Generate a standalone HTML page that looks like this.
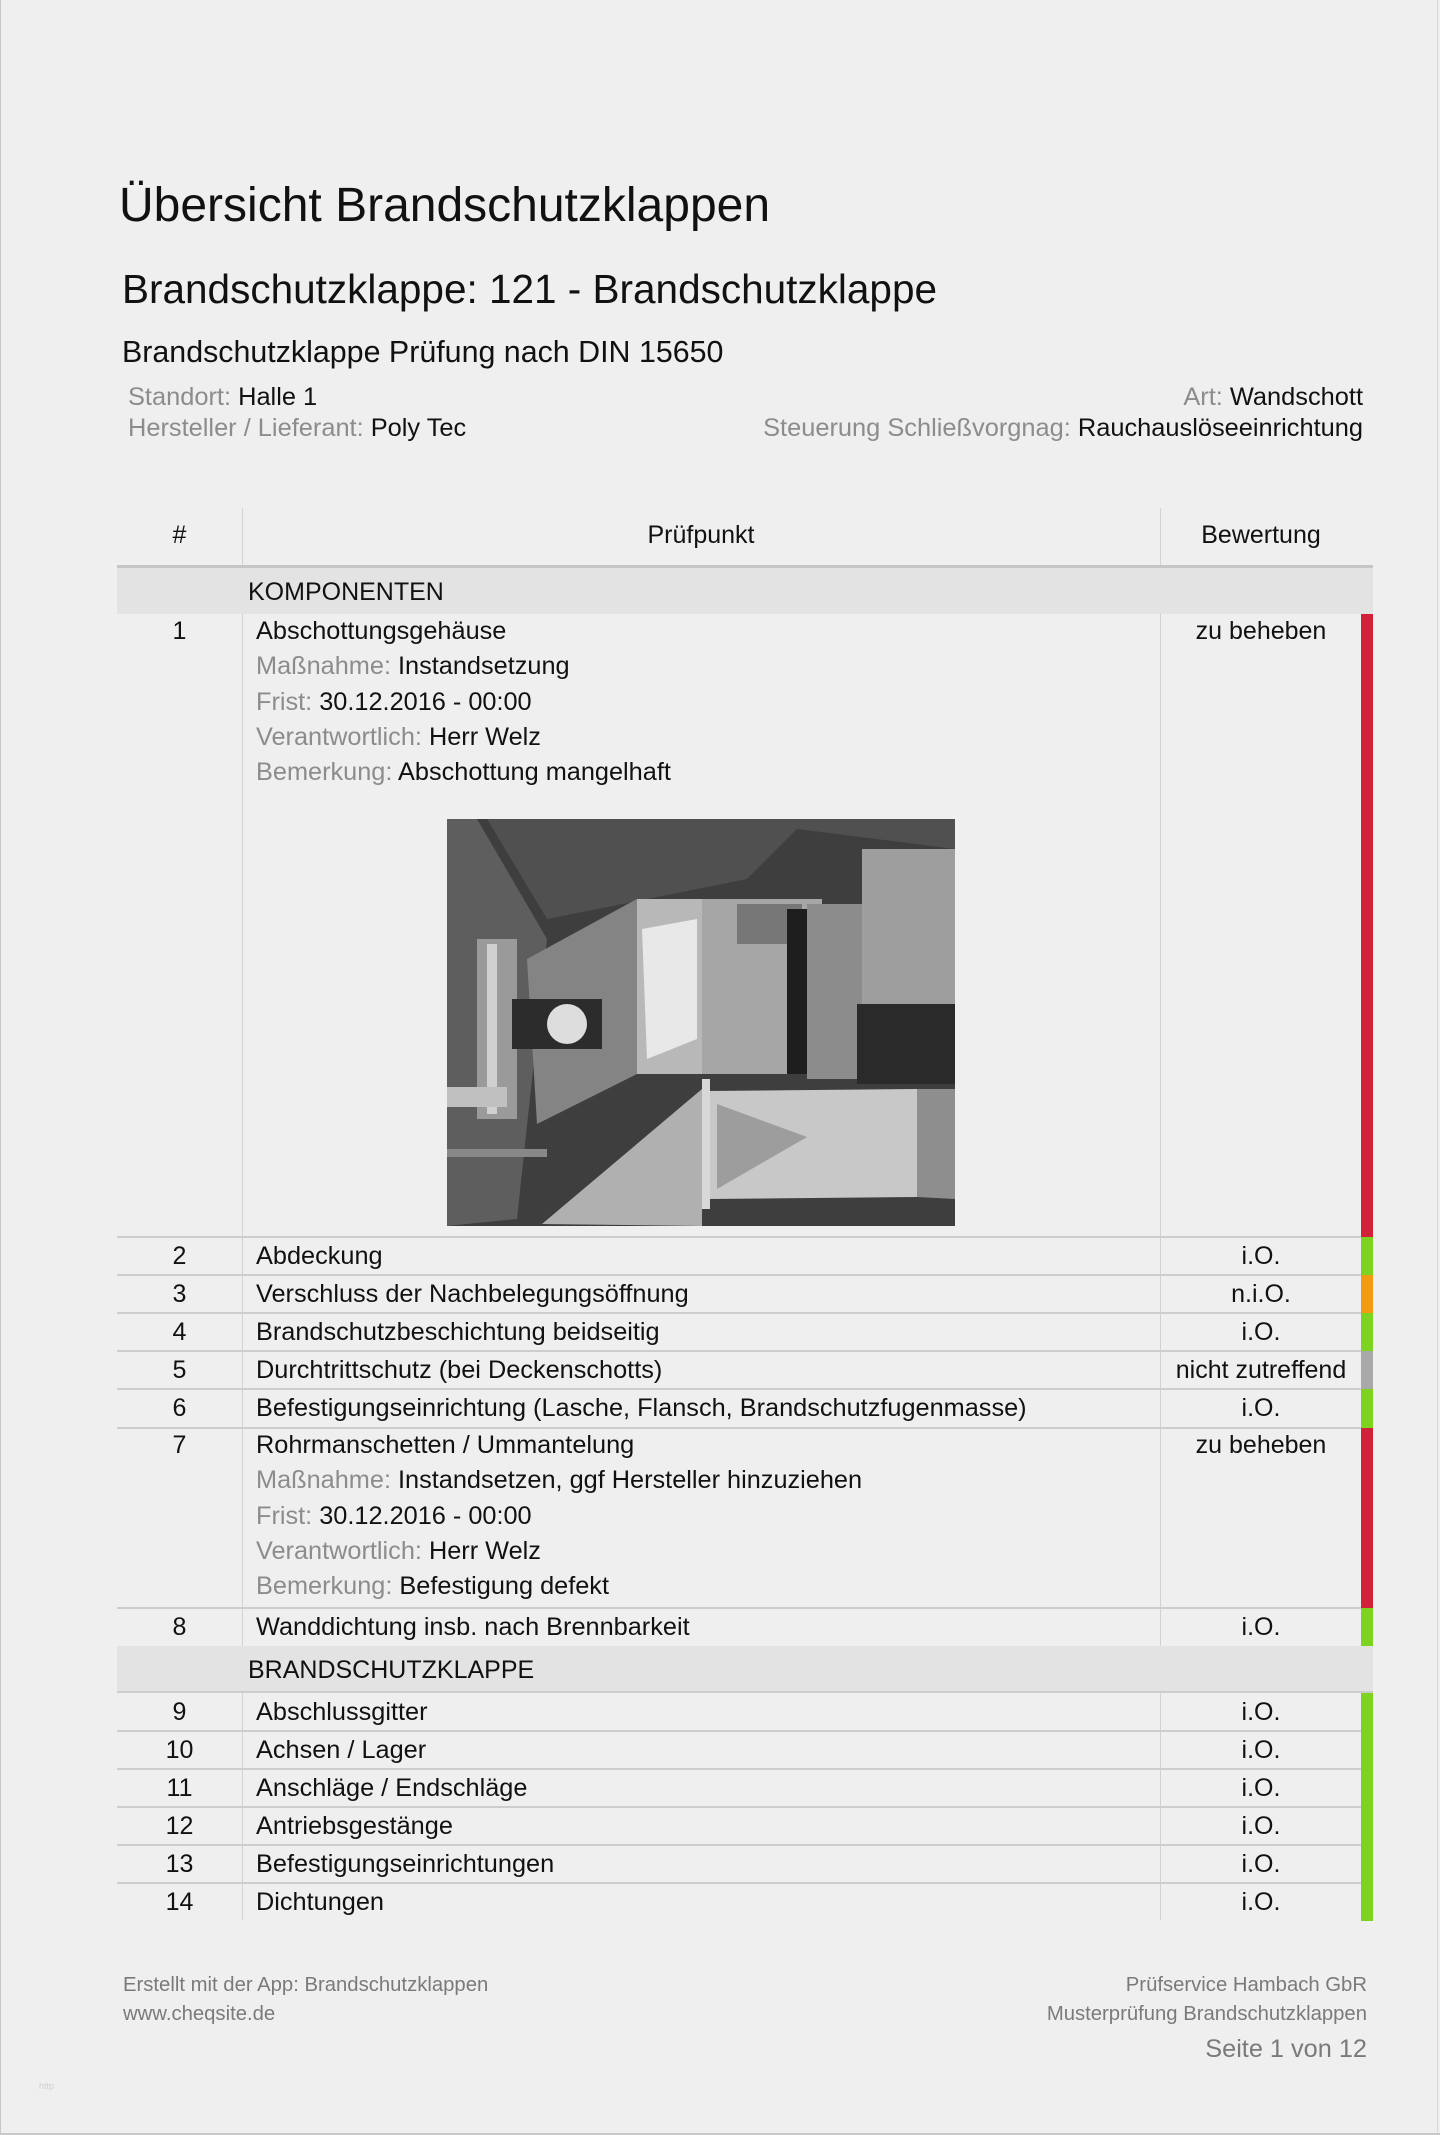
<!DOCTYPE html>
<html><head><meta charset="utf-8">
<style>
*{margin:0;padding:0;box-sizing:border-box}
html,body{width:1440px;height:2135px;background:#efefef;overflow:hidden}
body{position:relative;font-family:"Liberation Sans",Arial,sans-serif;color:#111}
.a{position:absolute;white-space:nowrap}
.g{color:#8c8c8c}
.hl{position:absolute;left:117px;width:1244px;height:2px;background:#cdcdcd}
.vl{position:absolute;width:1px;background:#d2d2d2}
.sec{position:absolute;left:117px;width:1256px;background:#e3e3e3}
.bar{position:absolute;left:1361px;width:12px}
.num{position:absolute;left:117px;width:125px;text-align:center;font-size:25px;line-height:39px}
.txt{position:absolute;left:256px;font-size:25.3px;line-height:39px;white-space:nowrap}
.bew{position:absolute;left:1161px;width:200px;text-align:center;font-size:25px;line-height:39px;white-space:nowrap}
.r{background:#d2223a}.gr{background:#7ed321}.o{background:#f29a12}.gy{background:#a9a9a9}
</style></head><body>
<div style="position:absolute;left:0;top:0;width:1px;height:2135px;background:#c8c8c8"></div>
<div style="position:absolute;left:1437px;top:0;width:1px;height:2135px;background:#d8d8d8"></div>
<div style="position:absolute;left:0;top:2133px;width:1440px;height:2px;background:#c8c8c8"></div>

<div class="a" style="left:119px;top:176px;font-size:48px;line-height:60px">Übersicht Brandschutzklappen</div>
<div class="a" style="left:122px;top:264px;font-size:40.5px;line-height:50px">Brandschutzklappe: 121 - Brandschutzklappe</div>
<div class="a" style="left:122px;top:333px;font-size:30.4px;line-height:38px">Brandschutzklappe Prüfung nach DIN 15650</div>
<div class="a" style="left:128px;top:382px;font-size:25.4px;line-height:30px"><span class="g">Standort:</span> Halle 1</div>
<div class="a" style="left:128px;top:413px;font-size:25.4px;line-height:30px"><span class="g">Hersteller / Lieferant:</span> Poly Tec</div>
<div class="a" style="right:77px;top:382px;font-size:25.4px;line-height:30px"><span class="g">Art:</span> Wandschott</div>
<div class="a" style="right:77px;top:413px;font-size:25.4px;line-height:30px"><span class="g">Steuerung Schließvorgnag:</span> Rauchauslöseeinrichtung</div>

<div class="vl" style="left:242px;top:508px;height:1412px"></div>
<div class="vl" style="left:1160px;top:508px;height:1412px"></div>
<div class="num" style="top:516px">#</div>
<div class="a" style="left:242px;width:918px;text-align:center;top:516px;font-size:25px;line-height:38px">Prüfpunkt</div>
<div class="bew" style="top:516px;width:200px">Bewertung</div>
<div style="position:absolute;left:117px;top:565px;width:1256px;height:3px;background:#c6c6c6"></div>

<div class="sec" style="top:568px;height:46px"></div>
<div class="a" style="left:248px;top:573px;font-size:25px;line-height:38px">KOMPONENTEN</div>

<div class="num" style="top:612px">1</div>
<div class="txt" style="top:614px;line-height:35.3px">Abschottungsgehäuse<br><span class="g">Maßnahme:</span> Instandsetzung<br><span class="g">Frist:</span> 30.12.2016 - 00:00<br><span class="g">Verantwortlich:</span> Herr Welz<br><span class="g">Bemerkung:</span> Abschottung mangelhaft</div>
<div class="bew" style="top:612px">zu beheben</div>
<div class="bar r" style="top:614px;height:623px"></div>
<svg style="position:absolute;left:447px;top:819px" width="508" height="407" viewBox="0 0 508 407">
<rect width="508" height="407" fill="#3e3e3e"/>
<polygon points="0,0 508,0 508,30 350,10 300,60 200,80 100,100 40,0" fill="#505050"/>
<polygon points="0,0 30,0 100,120 70,400 0,407" fill="#5e5e5e"/>
<rect x="30" y="120" width="40" height="180" fill="#9a9a9a"/>
<rect x="40" y="125" width="10" height="170" fill="#d0d0d0"/>
<polygon points="80,140 190,80 190,255 90,305" fill="#848484"/>
<polygon points="190,80 255,80 255,255 190,255" fill="#b8b8b8"/>
<polygon points="195,110 250,100 250,220 200,240" fill="#e8e8e8"/>
<rect x="255" y="80" width="120" height="175" fill="#a6a6a6"/>
<rect x="290" y="85" width="65" height="40" fill="#777"/>
<rect x="340" y="90" width="20" height="165" fill="#1e1e1e"/>
<rect x="360" y="85" width="55" height="175" fill="#8c8c8c"/>
<rect x="415" y="30" width="93" height="160" fill="#9e9e9e"/>
<rect x="410" y="185" width="98" height="80" fill="#2a2a2a"/>
<rect x="65" y="180" width="90" height="50" fill="#2c2c2c"/>
<circle cx="120" cy="205" r="20" fill="#ddd"/>
<polygon points="95,405 255,270 255,407" fill="#b0b0b0"/>
<polygon points="260,272 470,270 470,378 260,380" fill="#c8c8c8"/>
<polygon points="270,285 360,318 270,370" fill="#9d9d9d"/>
<polygon points="470,270 508,270 508,380 470,378" fill="#8e8e8e"/>
<rect x="255" y="260" width="8" height="130" fill="#d8d8d8"/>
<rect x="0" y="330" width="100" height="8" fill="#888"/>
<rect x="0" y="268" width="60" height="20" fill="#c0c0c0"/>
</svg>

<div class="hl" style="top:1236px"></div>
<div class="num" style="top:1237px">2</div><div class="txt" style="top:1237px">Abdeckung</div><div class="bew" style="top:1237px">i.O.</div><div class="bar gr" style="top:1237px;height:38px"></div>
<div class="hl" style="top:1274px"></div>
<div class="num" style="top:1275px">3</div><div class="txt" style="top:1275px">Verschluss der Nachbelegungsöffnung</div><div class="bew" style="top:1275px">n.i.O.</div><div class="bar o" style="top:1275px;height:38px"></div>
<div class="hl" style="top:1312px"></div>
<div class="num" style="top:1313px">4</div><div class="txt" style="top:1313px">Brandschutzbeschichtung beidseitig</div><div class="bew" style="top:1313px">i.O.</div><div class="bar gr" style="top:1313px;height:38px"></div>
<div class="hl" style="top:1350px"></div>
<div class="num" style="top:1351px">5</div><div class="txt" style="top:1351px">Durchtrittschutz (bei Deckenschotts)</div><div class="bew" style="top:1351px">nicht zutreffend</div><div class="bar gy" style="top:1351px;height:38px"></div>
<div class="hl" style="top:1388px"></div>
<div class="num" style="top:1389px">6</div><div class="txt" style="top:1389px">Befestigungseinrichtung (Lasche, Flansch, Brandschutzfugenmasse)</div><div class="bew" style="top:1389px">i.O.</div><div class="bar gr" style="top:1389px;height:39px"></div>
<div class="hl" style="top:1427px"></div>
<div class="num" style="top:1426px">7</div>
<div class="txt" style="top:1428px;line-height:35.3px">Rohrmanschetten / Ummantelung<br><span class="g">Maßnahme:</span> Instandsetzen, ggf Hersteller hinzuziehen<br><span class="g">Frist:</span> 30.12.2016 - 00:00<br><span class="g">Verantwortlich:</span> Herr Welz<br><span class="g">Bemerkung:</span> Befestigung defekt</div>
<div class="bew" style="top:1426px">zu beheben</div><div class="bar r" style="top:1428px;height:180px"></div>
<div class="hl" style="top:1607px"></div>
<div class="num" style="top:1608px">8</div><div class="txt" style="top:1608px">Wanddichtung insb. nach Brennbarkeit</div><div class="bew" style="top:1608px">i.O.</div><div class="bar gr" style="top:1608px;height:38px"></div>

<div class="sec" style="top:1646px;height:46px"></div>
<div class="a" style="left:248px;top:1651px;font-size:25px;line-height:38px">BRANDSCHUTZKLAPPE</div>
<div style="position:absolute;left:117px;top:1691px;width:1256px;height:2px;background:#cdcdcd"></div>

<div class="num" style="top:1693px">9</div><div class="txt" style="top:1693px">Abschlussgitter</div><div class="bew" style="top:1693px">i.O.</div><div class="bar gr" style="top:1693px;height:38px"></div>
<div class="hl" style="top:1730px"></div>
<div class="num" style="top:1731px">10</div><div class="txt" style="top:1731px">Achsen / Lager</div><div class="bew" style="top:1731px">i.O.</div><div class="bar gr" style="top:1731px;height:38px"></div>
<div class="hl" style="top:1768px"></div>
<div class="num" style="top:1769px">11</div><div class="txt" style="top:1769px">Anschläge / Endschläge</div><div class="bew" style="top:1769px">i.O.</div><div class="bar gr" style="top:1769px;height:38px"></div>
<div class="hl" style="top:1806px"></div>
<div class="num" style="top:1807px">12</div><div class="txt" style="top:1807px">Antriebsgestänge</div><div class="bew" style="top:1807px">i.O.</div><div class="bar gr" style="top:1807px;height:38px"></div>
<div class="hl" style="top:1844px"></div>
<div class="num" style="top:1845px">13</div><div class="txt" style="top:1845px">Befestigungseinrichtungen</div><div class="bew" style="top:1845px">i.O.</div><div class="bar gr" style="top:1845px;height:38px"></div>
<div class="hl" style="top:1882px"></div>
<div class="num" style="top:1883px">14</div><div class="txt" style="top:1883px">Dichtungen</div><div class="bew" style="top:1883px">i.O.</div><div class="bar gr" style="top:1883px;height:38px"></div>

<div class="a" style="left:123px;top:1973px;font-size:20.3px;line-height:24px;color:#7a7a7a">Erstellt mit der App: Brandschutzklappen</div>
<div class="a" style="left:123px;top:2002px;font-size:20.3px;line-height:24px;color:#7a7a7a">www.cheqsite.de</div>
<div class="a" style="right:73px;top:1973px;font-size:20.3px;line-height:24px;color:#7a7a7a">Prüfservice Hambach GbR</div>
<div class="a" style="right:73px;top:2002px;font-size:20.3px;line-height:24px;color:#7a7a7a">Musterprüfung Brandschutzklappen</div>
<div class="a" style="right:73px;top:2034px;font-size:25.3px;line-height:30px;color:#7a7a7a">Seite 1 von 12</div>
<div class="a" style="left:39px;top:2081px;font-size:9px;color:#cfcfcf">http</div>
</body></html>
